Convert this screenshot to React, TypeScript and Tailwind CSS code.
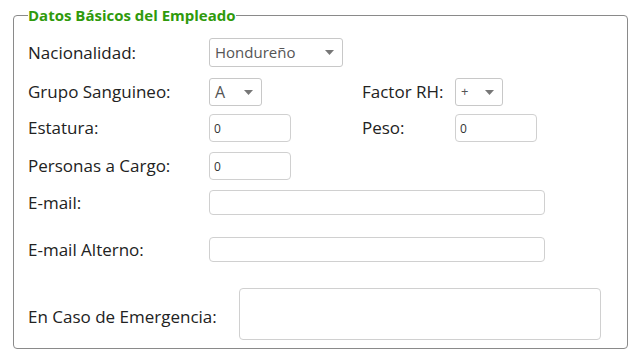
import type { ReactNode } from "react";

function Label({ children, w = "w-[181px]" }: { children: ReactNode; w?: string }) {
  return <span className={`${w} shrink-0 text-[17px] leading-[22px] text-[#222]`}>{children}</span>;
}

function Caret() {
  return (
    <svg width="9" height="5" viewBox="0 0 9 5" className="shrink-0">
      <path d="M0 0h9L4.5 5z" fill="#777" />
    </svg>
  );
}

function FakeSelect({ value, w, h, text = "text-[15px]" }: { value: string; w: string; h: string; text?: string }) {
  return (
    <div
      className={`${w} ${h} flex items-center justify-between rounded-[3px] border border-[#c8c8c8] bg-white pl-[5px] pr-[8px] ${text} text-[#555]`}
    >
      <span>{value}</span>
      <Caret />
    </div>
  );
}

function Field({ w, h, value = "" }: { w: string; h: string; value?: string }) {
  return (
    <input
      readOnly
      defaultValue={value}
      className={`${w} ${h} rounded-[4px] border border-[#d0d0d0] bg-white px-[4px] text-[12px] text-[#333] outline-none`}
    />
  );
}

export default function App() {
  return (
    <div className="h-[355px] w-[633px] bg-white pt-[7px] pl-[13px] font-['Open_Sans',sans-serif]">
      <fieldset className="w-[615px] h-[342px] rounded-[4px] border border-[#8a8a8a] pl-[14px]">
        <legend className="px-0 text-[15px] font-bold leading-[16px] text-[#2f9a0c]">Datos Básicos del Empleado</legend>

        <div className="mt-[15px] flex h-[29px] items-center">
          <Label>Nacionalidad:</Label>
          <FakeSelect value="Hondureño" w="w-[134px]" h="h-[29px]" />
        </div>

        <div className="mt-[11px] flex h-[28px] items-center">
          <Label>Grupo Sanguineo:</Label>
          <FakeSelect value="A" w="w-[53px]" h="h-[28px]" text="text-[16px]" />
          <span className="ml-[100px] w-[93px] text-[17px] text-[#222]">Factor RH:</span>
          <FakeSelect value="+" w="w-[48px]" h="h-[28px]" text="text-[13px]" />
        </div>

        <div className="mt-[8px] flex h-[28px] items-center">
          <Label>Estatura:</Label>
          <Field w="w-[82px]" h="h-[28px]" value="0" />
          <span className="ml-[71px] w-[93px] text-[17px] text-[#222]">Peso:</span>
          <Field w="w-[82px]" h="h-[28px]" value="0" />
        </div>

        <div className="mt-[10px] flex h-[28px] items-center">
          <Label>Personas a Cargo:</Label>
          <Field w="w-[82px]" h="h-[28px]" value="0" />
        </div>

        <div className="mt-[10px] flex h-[25px] items-center">
          <Label>E-mail:</Label>
          <Field w="w-[336px]" h="h-[25px]" />
        </div>

        <div className="mt-[22px] flex h-[25px] items-center">
          <Label>E-mail Alterno:</Label>
          <Field w="w-[336px]" h="h-[25px]" />
        </div>

        <div className="mt-[26px] flex h-[52px] items-center">
          <span className="w-[211px] shrink-0 pt-[6px] text-[17px] text-[#222]">En Caso de Emergencia:</span>
          <textarea
            readOnly
            className="h-[52px] w-[362px] resize-none rounded-[4px] border border-[#d0d0d0] bg-white outline-none"
          />
        </div>
      </fieldset>
    </div>
  );
}
